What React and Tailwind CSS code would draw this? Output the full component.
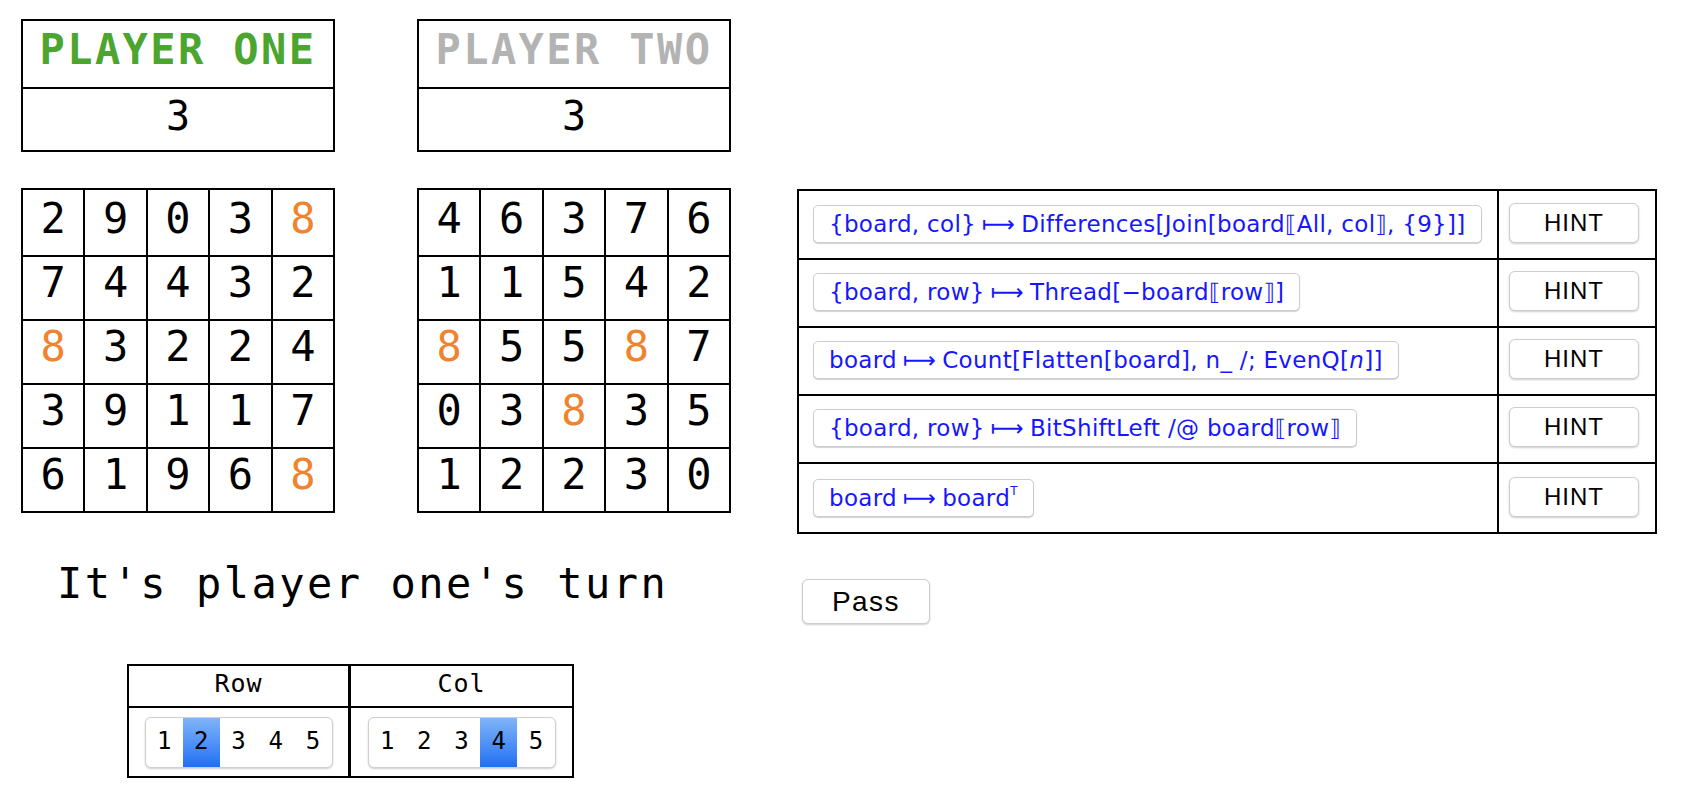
import React from 'react';

const boardOne = [
  [2, 9, 0, 3, 8],
  [7, 4, 4, 3, 2],
  [8, 3, 2, 2, 4],
  [3, 9, 1, 1, 7],
  [6, 1, 9, 6, 8],
];

const boardTwo = [
  [4, 6, 3, 7, 6],
  [1, 1, 5, 4, 2],
  [8, 5, 5, 8, 7],
  [0, 3, 8, 3, 5],
  [1, 2, 2, 3, 0],
];

const ScoreBox = ({ name, color, score }) => (
  <div className="w-[314px] border-2 border-black font-['DejaVu_Sans_Mono',monospace]">
    <div className="h-[68px] border-b-2 border-black flex items-end justify-center pb-[16px]">
      <span className={`text-[42px] leading-none font-bold tracking-[2.4px] ${color}`}>{name}</span>
    </div>
    <div className="h-[61px] flex items-end justify-center pb-[14px]">
      <span className="text-[40px] leading-none text-black">{score}</span>
    </div>
  </div>
);

const Board = ({ rows }) => (
  <div className="w-[314px] border-l-2 border-t-2 border-black grid grid-cols-5 font-['DejaVu_Sans_Mono',monospace]">
    {rows.map((row, r) =>
      row.map((n, c) => (
        <div
          key={`${r}-${c}`}
          className={`${r === 0 ? 'h-[67px]' : 'h-[64px]'} border-r-2 border-b-2 border-black flex items-end justify-center pb-[15px]`}
        >
          <span className={`text-[42px] leading-none ${n === 8 ? 'text-[#f0832d]' : 'text-black'}`}>{n}</span>
        </div>
      ))
    )}
  </div>
);

const Segments = ({ selected }) => (
  <div className="w-[188px] h-[51px] flex rounded-[6px] border border-[#cfcfcf] bg-white shadow-[0_1px_2px_rgba(0,0,0,0.2)] overflow-hidden">
    {[1, 2, 3, 4, 5].map((n) => (
      <div
        key={n}
        className={`flex-1 flex items-end justify-center pb-[14px] ${n === selected ? 'bg-gradient-to-b from-[#80b4f7] to-[#1e6ef4]' : ''}`}
      >
        <span className="text-[24px] leading-none text-black">{n}</span>
      </div>
    ))}
  </div>
);

const Formula = ({ children }) => (
  <div className="h-[38px] px-[15px] flex items-center rounded-[5px] border border-[#cdcdcd] bg-white shadow-[0_1px_1px_rgba(0,0,0,0.18)] font-['DejaVu_Sans',sans-serif] text-[23px] tracking-[0.3px] text-[#1616ff] whitespace-nowrap">
    {children}
  </div>
);

const Arrow = () => <span className="mx-[6px]">⟼</span>;

const hints = [
  <>
    {'{board, col}'}<Arrow />Differences[Join[board⟦All, col⟧, {'{9}'}]]
  </>,
  <>
    {'{board, row}'}<Arrow />Thread[−board⟦row⟧]
  </>,
  <>
    board<Arrow />Count[Flatten[board], n_ /; EvenQ[<i>n</i>]]
  </>,
  <>
    {'{board, row}'}<Arrow />BitShiftLeft /@ board⟦row⟧
  </>,
  <>
    board<Arrow />board<sup className="text-[12px] relative -top-[7px]">T</sup>
  </>,
];

const App = () => {
  return (
    <div className="w-[1682px] h-[801px] bg-white flex pl-[21px] pt-[19px]">
      <div className="w-[710px] flex flex-col">
        <div className="flex gap-[82px]">
          <ScoreBox name="PLAYER ONE" color="text-[#4ba52f]" score={3} />
          <ScoreBox name="PLAYER TWO" color="text-[#b3b3b3]" score={3} />
        </div>
        <div className="flex gap-[82px] mt-[36px]">
          <Board rows={boardOne} />
          <Board rows={boardTwo} />
        </div>
        <div className="ml-[36px] mt-[50px] font-['DejaVu_Sans_Mono',monospace] text-[42px] leading-none tracking-[2.5px] text-black">
          It's player one's turn
        </div>
        <div className="ml-[106px] mt-[59px] w-[447px] border-2 border-black grid grid-cols-[222px_1fr] font-['DejaVu_Sans_Mono',monospace]">
          <div className="h-[42px] border-r-[3px] border-b-2 border-black flex items-end justify-center pb-[10px]">
            <span className="text-[25px] leading-none tracking-[1px]">Row</span>
          </div>
          <div className="h-[42px] border-b-2 border-black flex items-end justify-center pb-[10px]">
            <span className="text-[25px] leading-none tracking-[1px]">Col</span>
          </div>
          <div className="h-[68px] border-r-[3px] border-black flex items-center justify-center">
            <Segments selected={2} />
          </div>
          <div className="h-[68px] flex items-center justify-center">
            <Segments selected={4} />
          </div>
        </div>
      </div>

      <div className="ml-[66px] pt-[170px] flex flex-col">
        <div className="w-[860px] border-2 border-black">
          {hints.map((h, i) => (
            <div
              key={i}
              className={`flex ${i === 0 ? 'h-[69px]' : 'h-[68px]'} ${i < hints.length - 1 ? 'border-b-2 border-black' : ''}`}
            >
              <div className="w-[700px] border-r-2 border-black flex items-end pl-[14px] pb-[15px]">
                <Formula>{h}</Formula>
              </div>
              <div className="flex-1 flex items-end pl-[10px] pb-[15px]">
                <button className="w-[130px] h-[40px] rounded-[6px] border border-[#cdcdcd] bg-white shadow-[0_1px_2px_rgba(0,0,0,0.2)] font-['Liberation_Sans',Arial,sans-serif] text-[24px] tracking-[1px] text-black">
                  HINT
                </button>
              </div>
            </div>
          ))}
        </div>
        <button className="ml-[5px] mt-[45px] w-[128px] h-[45px] rounded-[6px] border border-[#cdcdcd] bg-white shadow-[0_1px_2px_rgba(0,0,0,0.2)] font-['Liberation_Sans',Arial,sans-serif] text-[28px] tracking-[1.5px] text-black">
          Pass
        </button>
      </div>
    </div>
  );
};

export default App;
